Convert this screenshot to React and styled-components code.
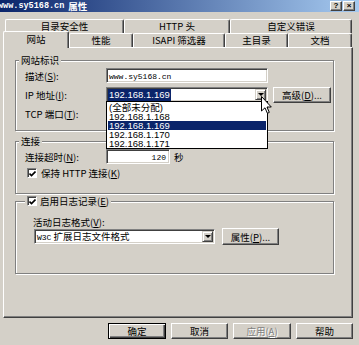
import React from 'react';
import styled, { createGlobalStyle, css } from 'styled-components';

const GlobalStyle = createGlobalStyle`
  html, body { margin: 0; padding: 0; }
  body {
    background: #d4d0c8;
    font-family: "Noto Sans CJK SC", "Liberation Sans", sans-serif;
    font-size: 9.5px;
    color: #000;
  }
  u { text-underline-offset: 1px; }
`;

const Window = styled.div`
  position: relative;
  width: 359px;
  height: 345px;
  background: #d4d0c8;
  display: flex;
  flex-direction: column;
  overflow: hidden;
`;

const TitleBar = styled.div`
  flex: none;
  height: 12px;
  background: linear-gradient(to right, #0a246a, #a6caf0);
  display: flex;
  align-items: center;
  padding-right: 4px;
  overflow: hidden;
`;

const Title = styled.div`
  flex: 1;
  margin-left: -2px;
  color: #fff;
  font-weight: bold;
  white-space: nowrap;
  display: flex;
  align-items: center;
  gap: 4px;
  line-height: 12px;
`;

const TitleMono = styled.span`
  font-family: "Liberation Mono", monospace;
  font-size: 8.5px;
`;

const CapButtons = styled.div`
  display: flex;
  gap: 1px;
`;

const CapButton = styled.div`
  width: 12px;
  height: 10px;
  box-sizing: border-box;
  background: #d4d0c8;
  border: 1px solid;
  border-color: #fff #404040 #404040 #fff;
  box-shadow: inset -1px -1px 0 #808080;
  display: flex;
  align-items: center;
  justify-content: center;
  font: bold 8px "Liberation Sans", sans-serif;
  line-height: 1;
`;

const Body = styled.div`
  flex: 1;
  display: flex;
  flex-direction: column;
  padding: 7px 6px 0 3px;
`;

const TabRow = styled.div`
  position: relative;
  z-index: ${p => (p.$front ? 2 : 1)};
  display: flex;
  align-items: flex-start;
  height: 14px;
  padding-left: ${p => p.$indent}px;
`;

const Tab = styled.div`
  box-sizing: border-box;
  width: ${p => p.$w}px;
  height: ${p => (p.$active ? 17 : 14)}px;
  margin-top: ${p => (p.$active ? -2 : 0)}px;
  background: #d4d0c8;
  border-top: 1px solid #fff;
  border-left: 1px solid #fff;
  border-right: 1px solid #404040;
  box-shadow: inset -1px 0 0 #808080;
  border-radius: 2px 2px 0 0;
  display: flex;
  align-items: center;
  justify-content: center;
  padding-bottom: ${p => (p.$active ? 3 : 1)}px;
  white-space: nowrap;
`;

const Panel = styled.div`
  box-sizing: border-box;
  height: 271px;
  border: 1px solid;
  border-color: #fff #404040 #404040 #fff;
  box-shadow: inset -1px -1px 0 #808080;
  padding: 12px 18px 0 11px;
  display: flex;
  flex-direction: column;
`;

const Group = styled.div`
  box-sizing: border-box;
  height: ${p => p.$h}px;
  margin-top: ${p => p.$mt || 0}px;
  border: 1px solid #808080;
  box-shadow: 1px 1px 0 #fff, inset 1px 1px 0 #fff;
  padding-left: 9px;
  display: flex;
  flex-direction: column;
`;

const Legend = styled.div`
  align-self: flex-start;
  margin: -7px 0 0 ${p => p.$ml}px;
  padding: 0 2px;
  height: 12px;
  line-height: 12px;
  background: #d4d0c8;
  display: flex;
  align-items: center;
  gap: 3px;
  white-space: nowrap;
`;

const FieldGrid = styled.div`
  display: grid;
  grid-template-columns: 81px auto;
  grid-auto-rows: 15px;
  row-gap: 4px;
  align-items: center;
  margin-top: ${p => p.$mt}px;
`;

const Label = styled.span`
  white-space: nowrap;
  line-height: 12px;
`;

const Line = styled.div`
  display: flex;
  align-items: center;
  gap: ${p => p.$gap || 0}px;
  margin-top: ${p => p.$mt || 0}px;
  margin-left: ${p => p.$ml || 0}px;
  height: ${p => p.$h || 'auto'};
`;

const Sunken = styled.div`
  position: relative;
  box-sizing: border-box;
  width: ${p => p.$w}px;
  height: 15px;
  background: #fff;
  border: 1px solid;
  border-color: #808080 #fff #fff #808080;
  box-shadow: inset 1px 1px 0 #404040, inset -1px -1px 0 #d4d0c8;
  padding: 1px 1px 1px 2px;
  display: flex;
  align-items: center;
  white-space: nowrap;
`;

const FieldText = styled.span`
  flex: 1;
  line-height: 11px;
  text-align: ${p => (p.$right ? 'right' : 'left')};
  padding-right: ${p => (p.$right ? 2 : 0)}px;
`;

const Mono = styled.span`
  font-family: "Liberation Mono", monospace;
  font-size: ${p => p.$size || 8}px;
`;

const Selected = styled.span`
  font-family: "Liberation Sans", sans-serif;
  font-size: 9.5px;
  line-height: 10px;
  background: #0a246a;
  color: #fff;
  padding: 0 1px 1px;
  margin-left: -1px;
`;

const DropBtn = styled.span`
  box-sizing: border-box;
  width: 11px;
  align-self: stretch;
  background: #d4d0c8;
  border: 1px solid;
  border-color: #d4d0c8 #404040 #404040 #d4d0c8;
  box-shadow: inset 1px 1px 0 #fff, inset -1px -1px 0 #808080;
  display: flex;
  align-items: center;
  justify-content: center;
  &::after {
    content: '';
    border-top: 3px solid #000;
    border-left: 3px solid transparent;
    border-right: 3px solid transparent;
  }
`;

const DropList = styled.ul`
  position: absolute;
  left: -1px;
  top: 100%;
  z-index: 5;
  width: 162px;
  box-sizing: border-box;
  margin: 0;
  padding: 1px 1px 0;
  list-style: none;
  background: #fff;
  border: 1px solid #000;
`;

const DropItem = styled.li`
  height: 9px;
  line-height: 9px;
  padding-left: 1px;
  font-family: "Liberation Sans", "Noto Sans CJK SC", sans-serif;
  font-size: 9.5px;
  background: ${p => (p.$sel ? '#0a246a' : 'transparent')};
  color: ${p => (p.$sel ? '#fff' : '#000')};
`;

const Button = styled.button`
  box-sizing: border-box;
  width: ${p => p.$w}px;
  height: ${p => p.$h || 16}px;
  margin: 0;
  padding: 0;
  font: inherit;
  line-height: 12px;
  color: #000;
  background: #d4d0c8;
  border: 1px solid;
  border-color: #fff #404040 #404040 #fff;
  box-shadow: inset -1px -1px 0 #808080;
  white-space: nowrap;
  ${p => p.$default && css`
    border-color: #000;
    box-shadow: inset 1px 1px 0 #fff, inset -1px -1px 0 #404040, inset -2px -2px 0 #808080;
  `}
  ${p => p.disabled && css`
    color: #808080;
    text-shadow: 1px 1px 0 #fff;
  `}
`;

const CheckBox = styled.span`
  flex: none;
  box-sizing: border-box;
  width: 10px;
  height: 10px;
  background: #fff;
  border: 1px solid;
  border-color: #808080 #fff #fff #808080;
  box-shadow: inset 1px 1px 0 #404040;
  display: flex;
  align-items: center;
  justify-content: center;
  padding: 1px 0 0 1px;
`;

const Footer = styled.div`
  display: flex;
  justify-content: flex-end;
  gap: 5px;
  margin-top: 5px;
`;

const Cursor = styled.svg`
  position: absolute;
  left: 261px;
  top: 96px;
  z-index: 10;
`;

const Check = () => (
  <CheckBox>
    <svg width="7" height="6" viewBox="0 0 7 6">
      <path d="M0.5 2.5 L2.5 4.5 L6.5 0.5" fill="none" stroke="#000" strokeWidth="1.6" />
    </svg>
  </CheckBox>
);

const ips = ['(全部未分配)', '192.168.1.168', '192.168.1.169', '192.168.1.170', '192.168.1.171'];

export default function App() {
  return (
    <>
      <GlobalStyle />
      <Window>
        <TitleBar>
          <Title>
            <TitleMono>www.sy5168.cn</TitleMono>
            <span>属性</span>
          </Title>
          <CapButtons>
            <CapButton>?</CapButton>
            <CapButton>×</CapButton>
          </CapButtons>
        </TitleBar>

        <Body>
          <TabRow $indent={2}>
            <Tab $w={119}>目录安全性</Tab>
            <Tab $w={106}>HTTP 头</Tab>
            <Tab $w={122}>自定义错误</Tab>
          </TabRow>
          <TabRow $indent={0} $front>
            <Tab $w={66} $active>网站</Tab>
            <Tab $w={64}>性能</Tab>
            <Tab $w={92}>ISAPI 筛选器</Tab>
            <Tab $w={63}>主目录</Tab>
            <Tab $w={64}>文档</Tab>
          </TabRow>

          <Panel>
            <Group $h={71}>
              <Legend $ml={-6}>网站标识</Legend>
              <FieldGrid $mt={2}>
                <Label>描述(<u>S</u>):</Label>
                <Sunken $w={162}>
                  <FieldText><Mono>www.sy5168.cn</Mono></FieldText>
                </Sunken>

                <Label>IP 地址(<u>I</u>):</Label>
                <Line $gap={5}>
                  <Sunken $w={162}>
                    <FieldText><Selected>192.168.1.169</Selected></FieldText>
                    <DropBtn />
                    <DropList>
                      {ips.map(ip => (
                        <DropItem key={ip} $sel={ip === '192.168.1.169'}>{ip}</DropItem>
                      ))}
                    </DropList>
                  </Sunken>
                  <Button $w={58} $h={16}>高级(<u>D</u>)...</Button>
                </Line>

                <Label>TCP 端口(<u>T</u>):</Label>
                <Sunken $w={60} />
              </FieldGrid>
            </Group>

            <Group $h={53} $mt={10}>
              <Legend $ml={-6}>连接</Legend>
              <FieldGrid $mt={2}>
                <Label>连接超时(<u>N</u>):</Label>
                <Line $gap={4}>
                  <Sunken $w={64}>
                    <FieldText $right><Mono>120</Mono></FieldText>
                  </Sunken>
                  <Label>秒</Label>
                </Line>
              </FieldGrid>
              <Line $gap={4} $mt={3} $ml={2}>
                <Check />
                <Label>保持 HTTP 连接(<u>K</u>)</Label>
              </Line>
            </Group>

            <Group $h={73} $mt={7}>
              <Legend $ml={0}>
                <Check />
                <span>启用日志记录(<u>E</u>)</span>
              </Legend>
              <Line $mt={9} $ml={8} $h="12px">
                <Label>活动日志格式(<u>V</u>):</Label>
              </Line>
              <Line $gap={7} $ml={9}>
                <Sunken $w={181}>
                  <FieldText><Mono>W3C</Mono> 扩展日志文件格式</FieldText>
                  <DropBtn />
                </Sunken>
                <Button $w={57} $h={17}>属性(<u>P</u>)...</Button>
              </Line>
            </Group>
          </Panel>

          <Footer>
            <Button $w={58} $default>确定</Button>
            <Button $w={57}>取消</Button>
            <Button $w={58} disabled>应用(<u>A</u>)</Button>
            <Button $w={57}>帮助</Button>
          </Footer>
        </Body>

        <Cursor width="12" height="19" viewBox="0 0 12 19">
          <path d="M0.5 0.5 V15 L4 11.8 L6.4 17.3 L8.3 16.4 L6 11 H10.3 Z" fill="#fff" stroke="#000" strokeWidth="1" />
        </Cursor>
      </Window>
    </>
  );
}
